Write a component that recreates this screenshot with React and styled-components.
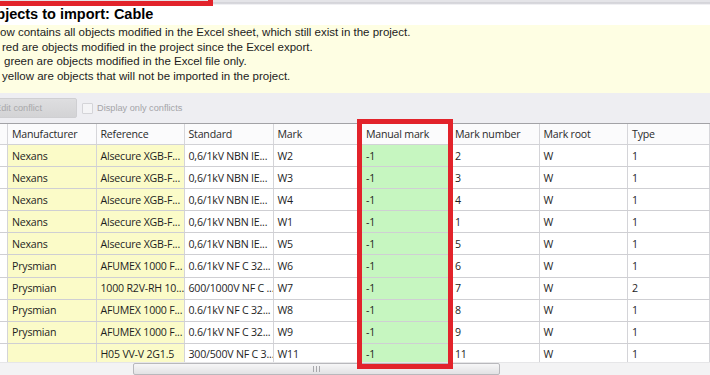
import React from "react";
import styled, { createGlobalStyle } from "styled-components";

const Global = createGlobalStyle`
  html, body { margin: 0; padding: 0; background: #ffffff; overflow: hidden; }
  #root { width: 710px; height: 375px; }
`;

const Page = styled.div`
  position: relative;
  width: 710px;
  height: 375px;
  overflow: hidden;
  display: flex;
  flex-direction: column;
  background: #ffffff;
`;

const TopStrip = styled.div`
  height: 5px;
  flex: none;
  background: linear-gradient(to bottom, #e4e4e8 0px, #e4e4e8 2px, #c6c6cc 3px, #e9e9ed 4px, #f7f7f9 5px);
`;

const Title = styled.h1`
  margin: 0 0 0 -15px;
  height: 20px;
  flex: none;
  font-family: "Liberation Sans", Arial, sans-serif;
  font-weight: bold;
  font-size: 14.5px;
  line-height: 18px;
  color: #000000;
  white-space: nowrap;
`;

const Info = styled.div`
  flex: none;
  height: 68px;
  box-sizing: border-box;
  background: #fefee3;
  font-family: "Liberation Sans", Arial, sans-serif;
  font-size: 11.5px;
  line-height: 14.5px;
  color: #1c1c1c;
`;

const InfoLine = styled.div`
  padding-left: ${(p) => p.$indent || 0}px;
  white-space: nowrap;
`;

const Toolbar = styled.div`
  flex: none;
  height: 30px;
  box-sizing: border-box;
  padding-top: 5px;
  background: #eeeef2;
  display: flex;
  align-items: flex-start;
  gap: 5px;
  font-family: "Liberation Sans", Arial, sans-serif;
  font-size: 9.2px;
  color: #a4a4a8;
`;

const ToolButton = styled.button`
  margin-left: -40px;
  width: 117px;
  height: 20px;
  border: 1px solid #cfcfd2;
  border-radius: 2px;
  background: linear-gradient(to bottom, #dedee0, #d3d3d5);
  font: inherit;
  color: #a8a8aa;
  text-align: center;
  padding: 0;
`;

const CheckLabel = styled.label`
  display: flex;
  align-items: center;
  gap: 4px;
  height: 20px;
  white-space: nowrap;
`;

const CheckBox = styled.span`
  width: 9px;
  height: 9px;
  border: 1px solid #d4d4d8;
  background: #f4f4f6;
  border-radius: 1px;
`;

const Grid = styled.div`
  flex: 1;
  min-height: 0;
  display: flex;
  flex-direction: column;
  border-top: 1px solid #a2a2a6;
  font-family: "Open Sans", "Noto Sans", sans-serif;
  font-size: 10.6px;
  letter-spacing: -0.2px;
  color: #1e1e1e;
`;

const cols = "8px 88.5px 88px 89px 88.5px 89px 88.5px 88.5px 1fr";

const HeaderRow = styled.div`
  flex: none;
  display: grid;
  grid-template-columns: ${cols};
  height: 21px;
  box-sizing: border-box;
  border-bottom: 1px solid #d2d2d6;
  background: #fbfbfc;
`;

const HeaderCell = styled.div`
  display: flex;
  align-items: center;
  padding-left: 4px;
  border-right: 1px solid #d6d6da;
  white-space: nowrap;
  overflow: hidden;
  color: #2a2a2a;
`;

const Body = styled.div`
  flex: 1;
  min-height: 0;
  overflow: hidden;
`;

const Row = styled.div`
  display: grid;
  grid-template-columns: ${cols};
  height: 22.1px;
  box-sizing: border-box;
  border-bottom: 1px solid #cfcfd3;
`;

const bgs = { yellow: "#fbfbc8", green: "#c6f6c0" };

const Cell = styled.div`
  display: flex;
  align-items: center;
  padding-left: 4px;
  border-right: 1px solid #d4d4d8;
  background: ${(p) => bgs[p.$bg] || "#ffffff"};
  white-space: nowrap;
  overflow: hidden;
`;

const HScroll = styled.div`
  flex: none;
  height: 13px;
  box-sizing: border-box;
  background: #f3f3f4;
  border-top: 1px solid #e6e6e8;
  display: flex;
`;

const Thumb = styled.div`
  margin-left: 133px;
  width: 367px;
  height: 12px;
  box-sizing: border-box;
  border: 1px solid #b8b8bc;
  border-radius: 2px;
  background: linear-gradient(to bottom, #f6f6f7, #e2e2e4);
  display: flex;
  align-items: center;
  justify-content: center;
  gap: 2px;
`;

const GripBar = styled.span`
  width: 1px;
  height: 6px;
  background: #a8a8ac;
`;

const Annotation = styled.div`
  position: absolute;
  border: 5px solid #e2232b;
  pointer-events: none;
  box-sizing: border-box;
`;

const headers = ["", "Manufacturer", "Reference", "Standard", "Mark", "Manual mark", "Mark number", "Mark root", "Type"];
const colBg = [null, "yellow", "yellow", null, null, "green", null, null, null];

const rows = [
  ["Nexans", "Alsecure XGB-F...", "0,6/1kV NBN IE...", "W2", "-1", "2", "W", "1"],
  ["Nexans", "Alsecure XGB-F...", "0,6/1kV NBN IE...", "W3", "-1", "3", "W", "1"],
  ["Nexans", "Alsecure XGB-F...", "0,6/1kV NBN IE...", "W4", "-1", "4", "W", "1"],
  ["Nexans", "Alsecure XGB-F...", "0,6/1kV NBN IE...", "W1", "-1", "1", "W", "1"],
  ["Nexans", "Alsecure XGB-F...", "0,6/1kV NBN IE...", "W5", "-1", "5", "W", "1"],
  ["Prysmian", "AFUMEX 1000 F...", "0.6/1kV NF C 32...", "W6", "-1", "6", "W", "1"],
  ["Prysmian", "1000 R2V-RH 10...", "600/1000V NF C ...", "W7", "-1", "7", "W", "2"],
  ["Prysmian", "AFUMEX 1000 F...", "0.6/1kV NF C 32...", "W8", "-1", "8", "W", "1"],
  ["Prysmian", "AFUMEX 1000 F...", "0.6/1kV NF C 32...", "W9", "-1", "9", "W", "1"],
  ["", "H05 VV-V 2G1.5", "300/500V NF C 3...", "W11", "-1", "11", "W", "1"],
];

export default function App() {
  return (
    <Page>
      <Global />
      <TopStrip />
      <Title>Objects to import: Cable</Title>
      <Info>
        <InfoLine $indent={0}>ow contains all objects modified in the Excel sheet, which still exist in the project.</InfoLine>
        <InfoLine $indent={2}>red are objects modified in the project since the Excel export.</InfoLine>
        <InfoLine $indent={4}>green are objects modified in the Excel file only.</InfoLine>
        <InfoLine $indent={2}>yellow are objects that will not be imported in the project.</InfoLine>
      </Info>
      <Toolbar>
        <ToolButton disabled>Edit conflict</ToolButton>
        <CheckLabel>
          <CheckBox />
          Display only conflicts
        </CheckLabel>
      </Toolbar>
      <Grid>
        <HeaderRow>
          {headers.map((h, i) => (
            <HeaderCell key={i}>{h}</HeaderCell>
          ))}
        </HeaderRow>
        <Body>
          {rows.map((r, ri) => (
            <Row key={ri}>
              <Cell />
              {r.map((v, ci) => (
                <Cell key={ci} $bg={colBg[ci + 1]}>
                  {v}
                </Cell>
              ))}
            </Row>
          ))}
        </Body>
        <HScroll>
          <Thumb>
            <GripBar />
            <GripBar />
            <GripBar />
          </Thumb>
        </HScroll>
      </Grid>
      <Annotation style={{ left: -10, top: -40, width: 223, height: 46 }} />
      <Annotation style={{ left: 357, top: 119, width: 96, height: 250 }} />
    </Page>
  );
}
